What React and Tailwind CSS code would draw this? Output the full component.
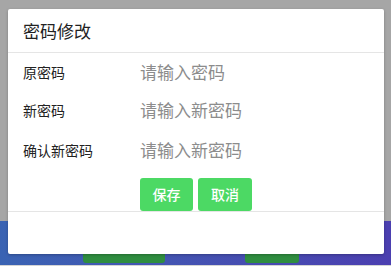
export default function App() {
    const rows = [
        { label: '原密码', placeholder: '请输入密码' },
        { label: '新密码', placeholder: '请输入新密码' },
        { label: '确认新密码', placeholder: '请输入新密码' },
    ];

    return (
        <div
            className="relative flex h-[266px] w-[391px] flex-col overflow-hidden bg-[#a6a6a6]"
            style={{ fontFamily: '"Noto Sans CJK SC", "Noto Sans", sans-serif' }}
        >
            {/* dimmed page behind the dialog */}
            <div className="h-[221px]" />
            <div className="flex h-[44px] bg-gradient-to-r from-[#3a63b3] to-[#4b3fb0] pt-[19px]">
                <div className="ml-[83px] h-[23px] w-[82px] rounded-[3px] bg-[#2f8d40]" />
                <div className="ml-[80px] h-[23px] w-[54px] rounded-[3px] bg-[#2f8d40]" />
            </div>
            <div className="h-[1px] bg-[#d4d4d4]" />

            {/* dialog */}
            <div className="absolute left-[8px] top-[9px] flex h-[245px] w-[376px] flex-col rounded-[2px] bg-white shadow-[0_1px_3px_rgba(0,0,0,0.25)]">
                <div className="flex h-[44px] items-center border-b border-[#e5e5e5] px-[15px] text-[17px] text-[#222]">
                    密码修改
                </div>
                <div className="flex flex-col pt-[1px]">
                    {rows.map((r, i) => (
                        <div key={r.label} className={`flex items-center px-[15px] ${i === 0 ? 'h-[36px]' : 'h-[40px]'}`}>
                            <div className="w-[117px] text-[14px] text-[#222]">{r.label}</div>
                            <input
                                className="w-[200px] border-0 bg-transparent text-[17px] text-[#333] outline-none placeholder:text-[#8c8c8c]"
                                placeholder={r.placeholder}
                            />
                        </div>
                    ))}
                </div>
                <div className="flex gap-[5px] border-b border-[#e5e5e5] pl-[132px] pt-[8px]">
                    <button className="h-[33px] w-[53px] rounded-[3px] bg-[#4cd964] text-[14px] font-medium text-white">
                        保存
                    </button>
                    <button className="h-[33px] w-[54px] rounded-[3px] bg-[#4cd964] text-[14px] font-medium text-white">
                        取消
                    </button>
                </div>
                <div className="flex-1" />
            </div>
        </div>
    );
}
